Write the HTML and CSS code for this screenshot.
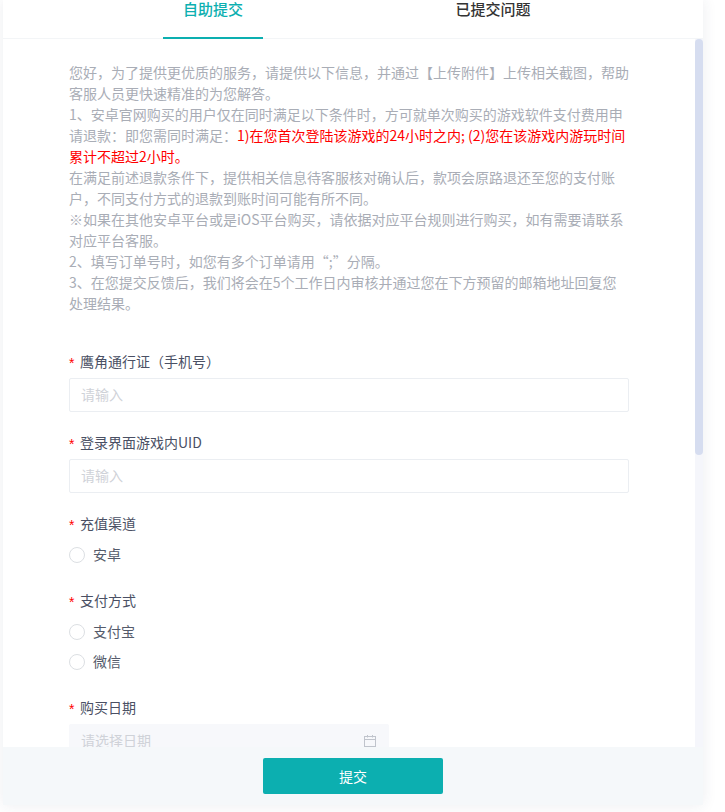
FILE: index.html
```html
<!DOCTYPE html>
<html lang="zh-CN">
<head>
<meta charset="utf-8">
<title>自助提交</title>
<link rel="stylesheet" href="styles.css">
</head>
<body>
<main class="card">
  <nav class="tabs">
    <span class="tab tab-active">自助提交</span>
    <span class="tab">已提交问题</span>
  </nav>
  <div class="body">
    <div class="content">
      <div class="notice">您好，为了提供更优质的服务，请提供以下信息，并通过【上传附件】上传相关截图，帮助客服人员更快速精准的为您解答。<br>1、安卓官网购买的用户仅在同时满足以下条件时，方可就单次购买的游戏软件支付费用申请退款：即您需同时满足：<span class="warn">1)在您首次登陆该游戏的24小时之内; (2)您在该游戏内游玩时间累计不超过2小时。</span><br>在满足前述退款条件下，提供相关信息待客服核对确认后，款项会原路退还至您的支付账户，不同支付方式的退款到账时间可能有所不同。<br>※如果在其他安卓平台或是iOS平台购买，请依据对应平台规则进行购买，如有需要请联系对应平台客服。<br>2、填写订单号时，如您有多个订单请用“;”分隔。<br>3、在您提交反馈后，我们将会在5个工作日内审核并通过您在下方预留的邮箱地址回复您处理结果。</div>
      <form class="form">
        <div class="item">
          <div class="label"><span class="star">*</span>鹰角通行证（手机号）</div>
          <div class="input"><span class="ph">请输入</span></div>
        </div>
        <div class="item">
          <div class="label"><span class="star">*</span>登录界面游戏内UID</div>
          <div class="input"><span class="ph">请输入</span></div>
        </div>
        <div class="item">
          <div class="label"><span class="star">*</span>充值渠道</div>
          <div class="radios">
            <div class="radio"><i class="dot"></i><span class="radio-text">安卓</span></div>
          </div>
        </div>
        <div class="item">
          <div class="label"><span class="star">*</span>支付方式</div>
          <div class="radios">
            <div class="radio"><i class="dot"></i><span class="radio-text">支付宝</span></div>
            <div class="radio"><i class="dot"></i><span class="radio-text">微信</span></div>
          </div>
        </div>
        <div class="item">
          <div class="label"><span class="star">*</span>购买日期</div>
          <div class="input input-date">
            <span class="ph">请选择日期</span>
            <svg class="cal" width="14" height="14" viewBox="0 0 14 14" fill="none" stroke="#c0c4cc" stroke-width="1">
              <rect x="1.5" y="2.5" width="11" height="10"/>
              <path d="M1.5 5.5h11M4.5 1v2.5M9.5 1v2.5"/>
            </svg>
          </div>
        </div>
      </form>
    </div>
    <div class="track"><div class="thumb"></div></div>
  </div>
  <footer class="footer">
    <button class="submit" type="button">提交</button>
  </footer>
</main>
</body>
</html>
```

FILE: styles.css
```css
html, body {
  margin: 0;
  height: 812px;
  overflow: hidden;
  background: #fff;
}
body {
  font-family: "Noto Sans CJK SC", "Liberation Sans", sans-serif;
  font-size: 14px;
  color: #4a5064;
}
.card {
  display: flex;
  flex-direction: column;
  width: 700px;
  height: 805px;
  margin-left: 3px;
  background: #fff;
  box-shadow: 0 0 14px rgba(40, 50, 90, 0.09);
}
.tabs {
  display: flex;
  flex: none;
  gap: 180px;
  height: 38px;
  padding-left: 160px;
  border-bottom: 1px solid #f3f5f7;
}
.tab {
  width: 100px;
  font-size: 15px;
  font-weight: 500;
  line-height: 18px;
  text-align: center;
  color: #333;
}
.tab-active {
  color: #0cafb0;
  height: 39px;
  box-sizing: border-box;
  border-bottom: 2px solid #0cafb0;
}
.body {
  display: flex;
  flex: 1;
  min-height: 0;
  overflow: hidden;
}
.content {
  flex: 1;
  min-width: 0;
  padding: 23px 0 0 66px;
}
.notice {
  width: 560px;
  line-height: 21px;
  color: #a9adb6;
}
.warn {
  color: #f00;
}
.form {
  width: 560px;
  margin-top: 38px;
}
.item {
  margin-bottom: 21px;
}
.label {
  height: 20px;
  line-height: 18px;
  margin-bottom: 6px;
}
.star {
  display: inline-block;
  width: 11px;
  font-family: "Liberation Sans", sans-serif;
  font-size: 14px;
  line-height: 14px;
  vertical-align: -1px;
  color: #f00;
}
.input {
  display: flex;
  align-items: center;
  justify-content: space-between;
  box-sizing: border-box;
  height: 34px;
  padding: 0 11px;
  border: 1px solid #ebeef2;
  border-radius: 2px;
  background: #fff;
}
.input-date {
  width: 320px;
  border-color: #f7f8fb;
  background: #f7f8fb;
}
.ph {
  margin-bottom: 2px;
  line-height: 18px;
  color: #cfd2d8;
}
.cal {
  display: block;
}
.radio {
  display: flex;
  align-items: center;
  gap: 8px;
  height: 30px;
  color: #555b6b;
}
.radio-text {
  margin-bottom: 2px;
  line-height: 18px;
}
.dot {
  box-sizing: border-box;
  width: 16px;
  height: 16px;
  border: 1px solid #dcdfe3;
  border-radius: 50%;
}
.track {
  flex: none;
  width: 8px;
  background: #f5f6fb;
}
.thumb {
  height: 416px;
  border-radius: 4px;
  background: #d6ddf0;
}
.footer {
  display: flex;
  flex: none;
  justify-content: center;
  align-items: flex-start;
  box-sizing: border-box;
  height: 58px;
  padding-top: 11px;
  background: #f5f8fa;
}
.submit {
  width: 180px;
  height: 36px;
  border: 0;
  border-radius: 2px;
  background: #0cafb0;
  color: #fff;
  font: inherit;
}
```
